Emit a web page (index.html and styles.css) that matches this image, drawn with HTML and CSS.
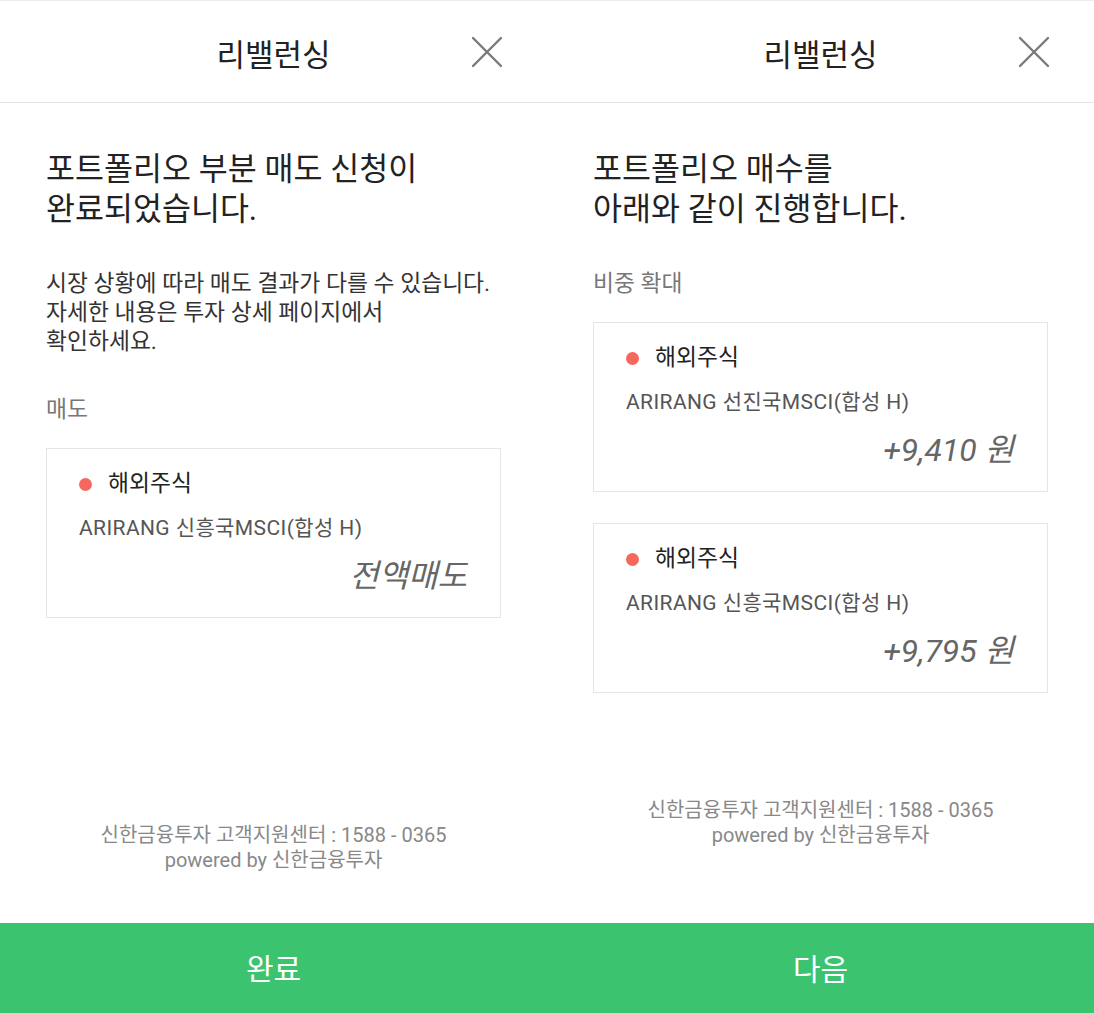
FILE: index.html
```html
<!DOCTYPE html>
<html lang="ko">
<head>
<meta charset="utf-8">
<title>리밸런싱</title>
<link rel="stylesheet" href="styles.css">
</head>
<body>
<div class="screens">
  <section class="panel panel-left">
    <header class="topbar">
      <h1 class="title">리밸런싱</h1>
      <svg class="close" width="32" height="32" viewBox="0 0 32 32"><path d="M2 2 L30 30 M30 2 L2 30" stroke="#7a7a7a" stroke-width="2.4" stroke-linecap="round" fill="none"/></svg>
    </header>
    <main class="content">
      <h2 class="heading">포트폴리오 부분 매도 신청이<br>완료되었습니다.</h2>
      <p class="desc">시장 상황에 따라 매도 결과가 다를 수 있습니다.<br>자세한 내용은 투자 상세 페이지에서<br>확인하세요.</p>
      <div class="label">매도</div>
      <div class="card">
        <div class="cat"><span class="dot"></span>해외주식</div>
        <div class="name">ARIRANG 신흥국MSCI(합성 H)</div>
        <div class="amount">전액매도</div>
      </div>
    </main>
    <footer class="foot foot-left">
      <div>신한금융투자 고객지원센터 : 1588 - 0365</div>
      <div>powered by 신한금융투자</div>
    </footer>
    <button class="cta">완료</button>
  </section>
  <section class="panel panel-right">
    <header class="topbar">
      <h1 class="title">리밸런싱</h1>
      <svg class="close" width="32" height="32" viewBox="0 0 32 32"><path d="M2 2 L30 30 M30 2 L2 30" stroke="#7a7a7a" stroke-width="2.4" stroke-linecap="round" fill="none"/></svg>
    </header>
    <main class="content">
      <h2 class="heading">포트폴리오 매수를<br>아래와 같이 진행합니다.</h2>
      <div class="label label-right">비중 확대</div>
      <div class="card">
        <div class="cat"><span class="dot"></span>해외주식</div>
        <div class="name">ARIRANG 선진국MSCI(합성 H)</div>
        <div class="amount">+9,410 원</div>
      </div>
      <div class="card card-gap">
        <div class="cat"><span class="dot"></span>해외주식</div>
        <div class="name">ARIRANG 신흥국MSCI(합성 H)</div>
        <div class="amount">+9,795 원</div>
      </div>
    </main>
    <footer class="foot foot-right">
      <div>신한금융투자 고객지원센터 : 1588 - 0365</div>
      <div>powered by 신한금융투자</div>
    </footer>
    <button class="cta">다음</button>
  </section>
</div>
</body>
</html>
```
FILE: styles.css
```css
* { box-sizing: border-box; }
html, body { margin: 0; padding: 0; background: #fff; }
body {
  font-family: Roboto, "Noto Sans CJK KR", sans-serif;
  color: #222;
}
.screens {
  display: flex;
  width: 1094px;
  height: 1013px;
  border-top: 1px solid #ececec;
}
.panel {
  width: 547px;
  display: flex;
  flex-direction: column;
  height: 1012px;
}
.topbar {
  height: 102px;
  border-bottom: 1px solid #e4e4e4;
  position: relative;
  display: flex;
  align-items: center;
  justify-content: center;
}
.title {
  margin: 0;
  font-size: 31px;
  font-weight: 400;
  color: #222;
  line-height: 40px;
  padding-top: 8px;
}
.close {
  position: absolute;
  left: 471px;
  top: 35px;
}
.content {
  padding: 0 46px;
  display: flex;
  flex-direction: column;
}
.heading {
  margin: 47px 0 0;
  font-size: 31.5px;
  line-height: 40px;
  font-weight: 400;
  color: #222;
}
.desc {
  margin: 39px 0 0;
  font-size: 22.8px;
  line-height: 29px;
  color: #333;
}
.label {
  margin-top: 39px;
  font-size: 22.8px;
  line-height: 29px;
  color: #777;
}
.label-right { margin-top: 39px; }
.card {
  margin-top: 24px;
  border: 1px solid #e5e5e5;
  height: 170px;
  padding: 20px 33px 0 32px;
}
.card-gap { margin-top: 31px; }
.cat {
  display: flex;
  align-items: center;
  font-size: 22.8px;
  line-height: 30px;
  color: #222;
}
.dot {
  width: 13px;
  height: 13px;
  border-radius: 50%;
  background: #f6675e;
  margin-right: 16px;
}
.name {
  margin-top: 14px;
  font-size: 21px;
  letter-spacing: 0.4px;
  line-height: 30px;
  color: #555;
}
.amount {
  margin-top: 13px;
  text-align: right;
  font-size: 32px;
  line-height: 40px;
  font-style: italic;
  color: #666;
}
.foot {
  margin-top: auto;
  text-align: center;
  font-size: 20px;
  line-height: 25px;
  color: #888;
}
.foot-left { margin-bottom: 50px; }
.foot-right { margin-bottom: 75px; }
.cta {
  height: 90px;
  border: 0;
  margin: 0;
  background: #3cc370;
  color: #fff;
  font-family: Roboto, "Noto Sans CJK KR", sans-serif;
  font-size: 30px;
  padding: 0 0 2px;
  width: 100%;
}
```
